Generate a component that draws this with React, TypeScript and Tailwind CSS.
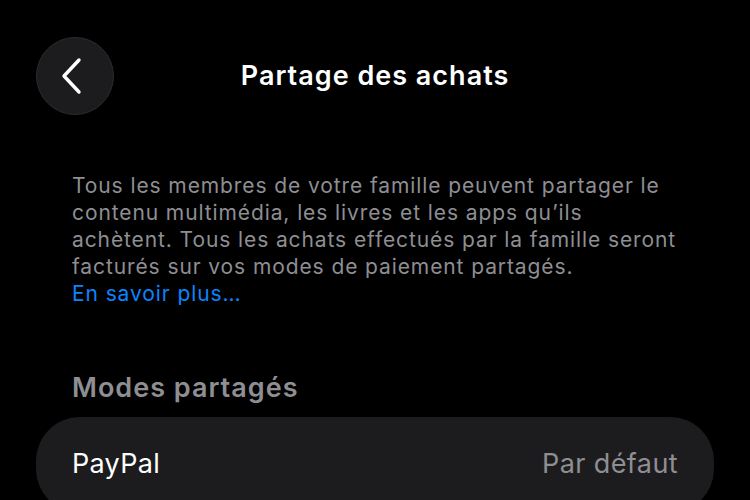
export default function App() {
  return (
    <div
      className="h-[500px] w-[750px] overflow-hidden bg-black"
      style={{ fontFamily: "Inter, 'Noto Sans', sans-serif" }}
    >
      <header className="relative flex h-[152px] items-start pt-[37px]">
        <button className="ml-[36px] flex h-[78px] w-[78px] items-center justify-center rounded-full border border-[#2c2c2e] bg-[#1c1c1e] text-white">
          <svg
            width="22"
            height="38"
            viewBox="0 0 22 38"
            fill="none"
            stroke="currentColor"
            strokeWidth="3.4"
            strokeLinecap="round"
            strokeLinejoin="round"
            className="mr-[6px]"
          >
            <path d="M18 3 L3 19 L18 35" />
          </svg>
        </button>
        <h1 className="absolute left-0 right-0 top-[57px] text-center text-[27px] font-semibold leading-[38px] tracking-[1px] text-white">
          Partage des achats
        </h1>
      </header>

      <p className="px-[72px] pt-[20px] text-[21px] leading-[27px] tracking-[0.9px] text-[#8e8e93]">
        Tous les membres de votre famille peuvent partager le
        <br />
        contenu multimédia, les livres et les apps qu’ils
        <br />
        achètent. Tous les achats effectués par la famille seront
        <br />
        facturés sur vos modes de paiement partagés.
        <br />
        <span className="text-[#0a84ff]">En savoir plus…</span>
      </p>

      <h2 className="px-[72px] pt-[63px] text-[27px] font-semibold leading-[36px] tracking-[1px] text-[#8e8e93]">
        Modes partagés
      </h2>

      <div className="mx-[36px] mt-[11px] flex h-[96px] items-center justify-between rounded-[44px] bg-[#1c1c1e] px-[36px] pb-[2px]">
        <span className="text-[27px] tracking-[0.3px] text-white">PayPal</span>
        <span className="text-[27px] tracking-[0.4px] text-[#8e8e93]">Par défaut</span>
      </div>
    </div>
  );
}
